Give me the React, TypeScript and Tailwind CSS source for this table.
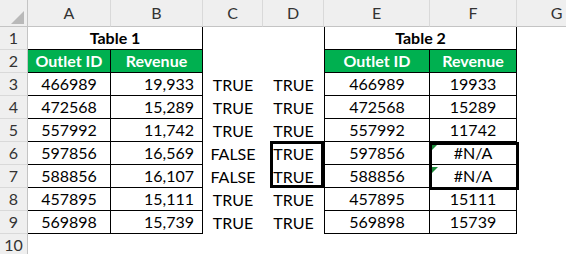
import React from "react";

const rows = [
  ["466989", "19,933", "TRUE", "TRUE", "466989", "19933"],
  ["472568", "15,289", "TRUE", "TRUE", "472568", "15289"],
  ["557992", "11,742", "TRUE", "TRUE", "557992", "11742"],
  ["597856", "16,569", "FALSE", "TRUE", "597856", "#N/A"],
  ["588856", "16,107", "FALSE", "TRUE", "588856", "#N/A"],
  ["457895", "15,111", "TRUE", "TRUE", "457895", "15111"],
  ["569898", "15,739", "TRUE", "TRUE", "569898", "15739"],
];

const colHeads = ["A", "B", "C", "D", "E", "F", "G"];

function ErrorMark() {
  return (
    <span className="absolute left-[2px] top-[2px] h-0 w-0 border-t-[6px] border-r-[6px] border-t-[#1e8b3c] border-r-transparent" />
  );
}

export default function App() {
  return (
    <div
      className="relative h-[254px] w-[566px] overflow-hidden bg-white text-[16px] text-black"
      style={{ fontFamily: "Lato, 'Open Sans', sans-serif" }}
    >
      <div className="grid grid-cols-[28px_83px_92px_60px_61px_106px_87px_80px] grid-rows-[27px_repeat(10,23px)]">
        {/* corner */}
        <div className="relative border-b border-r border-[#c4c4c4] bg-[#efefef]">
          <svg className="absolute left-0 top-0" width="28" height="27" viewBox="0 0 28 27">
            <polygon points="24,11 24,24 11,24" fill="#b9b9b9" />
          </svg>
        </div>
        {colHeads.map((c) => (
          <div
            key={c}
            className="flex items-center justify-center border-b border-r border-b-[#c4c4c4] border-r-[#d9d9d9] bg-[#efefef] text-[#333]"
          >
            {c}
          </div>
        ))}

        {/* row 1 */}
        <div className="flex items-center justify-center border-b border-r border-b-[#d9d9d9] border-r-[#c4c4c4] bg-[#efefef] text-[#333]">
          1
        </div>
        <div className="col-span-2 flex items-center justify-center border-b border-r border-black font-bold">
          Table 1
        </div>
        <div />
        <div />
        <div className="col-span-2 flex items-center justify-center border-b border-l border-r border-black font-bold">
          Table 2
        </div>
        <div />

        {/* row 2 */}
        <div className="flex items-center justify-center border-b border-r border-b-[#d9d9d9] border-r-[#c4c4c4] bg-[#efefef] text-[#333]">
          2
        </div>
        <div className="flex items-center justify-center border-b border-r border-black bg-[#00b050] font-bold text-white">
          Outlet ID
        </div>
        <div className="flex items-center justify-center border-b border-r border-black bg-[#00b050] font-bold text-white">
          Revenue
        </div>
        <div />
        <div />
        <div className="flex items-center justify-center border-b border-l border-r border-black bg-[#00b050] font-bold text-white">
          Outlet ID
        </div>
        <div className="flex items-center justify-center border-b border-r border-black bg-[#00b050] font-bold text-white">
          Revenue
        </div>
        <div />

        {rows.map((r, i) => (
          <React.Fragment key={i}>
            <div className="flex items-center justify-center border-b border-r border-b-[#d9d9d9] border-r-[#c4c4c4] bg-[#efefef] text-[#333]">
              {i + 3}
            </div>
            <div className="flex items-center justify-center border-b border-r border-black">{r[0]}</div>
            <div className="flex items-center justify-end border-b border-r border-black pr-[8px]">{r[1]}</div>
            <div className="flex items-center justify-center">{r[2]}</div>
            <div className="flex items-center justify-center">{r[3]}</div>
            <div className="flex items-center justify-center border-b border-l border-r border-black">{r[4]}</div>
            <div className="relative flex items-center justify-center border-b border-r border-black">
              {r[5] === "#N/A" && <ErrorMark />}
              {r[5]}
            </div>
            <div />
          </React.Fragment>
        ))}

        {/* row 10 */}
        <div className="flex items-center justify-center border-b border-r border-b-[#d9d9d9] border-r-[#c4c4c4] bg-[#efefef] text-[#333]">
          10
        </div>
      </div>

      {/* annotation boxes */}
      <div className="pointer-events-none absolute left-[270px] top-[141px] h-[47px] w-[54px] border-[3px] border-black" />
      <div className="pointer-events-none absolute left-[429px] top-[142px] h-[48px] w-[90px] border-[3px] border-black" />
    </div>
  );
}
